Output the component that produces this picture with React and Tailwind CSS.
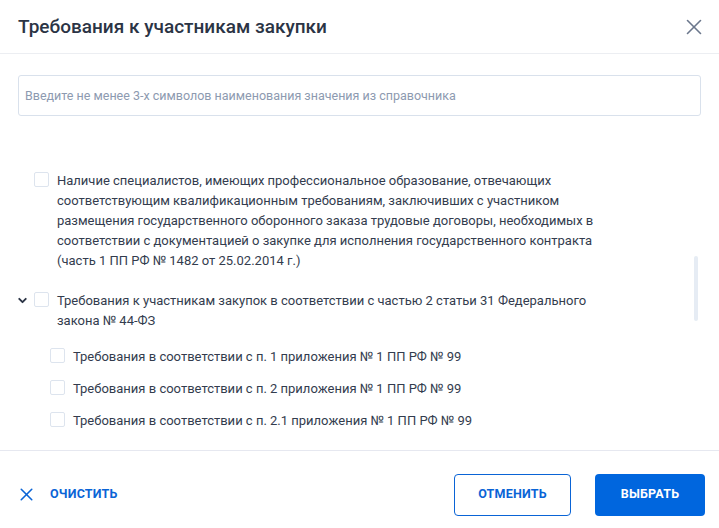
import React from 'react';
import { X, ChevronDown } from 'lucide-react';

const font = { fontFamily: 'Roboto, "Noto Sans", sans-serif' };

// Checkbox square
const Box = () => (
  <span className="mt-[1px] block w-[15px] h-[15px] shrink-0 rounded-[2px] border border-[#dde4ee] bg-white" />
);

const Item = ({ children, expandable, className = '' }) => (
  <div className={`flex items-start ${className}`}>
    <div className="w-[17px] shrink-0 pt-[3px] -ml-[1px]">
      {expandable && <ChevronDown className="w-[13px] h-[13px] -ml-[1px] text-[#2b3445]" strokeWidth={3.5} />}
    </div>
    <Box />
    <p className="ml-[8px] text-[13px] leading-[20px] text-[#333c4e]">{children}</p>
  </div>
);

export default function App() {
  return (
    <div style={font} className="w-[719px] h-[528px] bg-white flex flex-col overflow-hidden">
      {/* Header */}
      <div className="h-[54px] shrink-0 flex items-center justify-between pl-[18px] pr-[12px] border-b border-[#eceef2]">
        <h1 className="text-[19px] font-medium text-[#2b3445] pt-[1px]">Требования к участникам закупки</h1>
        <X className="w-[26px] h-[26px] text-[#6b778c]" strokeWidth={1.5} />
      </div>

      {/* Body */}
      <div className="relative flex-1 px-[18px] pt-[21px] overflow-hidden">
        <div className="h-[41px] rounded-[3px] border border-[#d9e1ec] flex items-center px-[6px] pt-[2px]">
          <span className="text-[12.5px] text-[#8d9ab0]">Введите не менее 3-х символов наименования значения из справочника</span>
        </div>

        <div className="pt-[55px] pr-[90px]">
          <Item>
            Наличие специалистов, имеющих профессиональное образование, отвечающих соответствующим квалификационным требованиям, заключивших с участником размещения государственного оборонного заказа трудовые договоры, необходимых в соответствии с документацией о закупке для исполнения государственного контракта (часть 1 ПП РФ № 1482 от 25.02.2014 г.)
          </Item>
          <Item expandable className="mt-[20px]">
            Требования к участникам закупок в соответствии с частью 2 статьи 31 Федерального закона № 44-ФЗ
          </Item>
          <div className="pl-[16px] pt-[10px]">
            <Item className="py-[6px]">Требования в соответствии с п. 1 приложения № 1 ПП РФ № 99</Item>
            <Item className="py-[6px]">Требования в соответствии с п. 2 приложения № 1 ПП РФ № 99</Item>
            <Item className="py-[6px]">Требования в соответствии с п. 2.1 приложения № 1 ПП РФ № 99</Item>
          </div>
        </div>

        {/* Scrollbar */}
        <div className="absolute right-[21px] top-[202px] w-[4px] h-[65px] rounded-full bg-[#e6ecf4]" />
      </div>

      {/* Footer */}
      <div className="h-[78px] shrink-0 border-t border-[#e6e8f0] flex items-center pt-[10px] pl-[16px] pr-[14px]">
        <button className="flex items-center gap-[13px] text-[#0a64d6]">
          <X className="w-[21px] h-[21px]" strokeWidth={1.8} />
          <span className="text-[12.5px] font-bold tracking-[0.2px]">ОЧИСТИТЬ</span>
        </button>
        <div className="ml-auto flex items-center gap-[24px]">
          <button className="w-[117px] h-[42px] rounded-[4px] border border-[#0a64d6] text-[#0a64d6] text-[12.5px] font-bold tracking-[0.2px]">
            ОТМЕНИТЬ
          </button>
          <button className="w-[110px] h-[42px] rounded-[4px] bg-[#0066de] text-white text-[12.5px] font-bold tracking-[0.2px]">
            ВЫБРАТЬ
          </button>
        </div>
      </div>
    </div>
  );
}
